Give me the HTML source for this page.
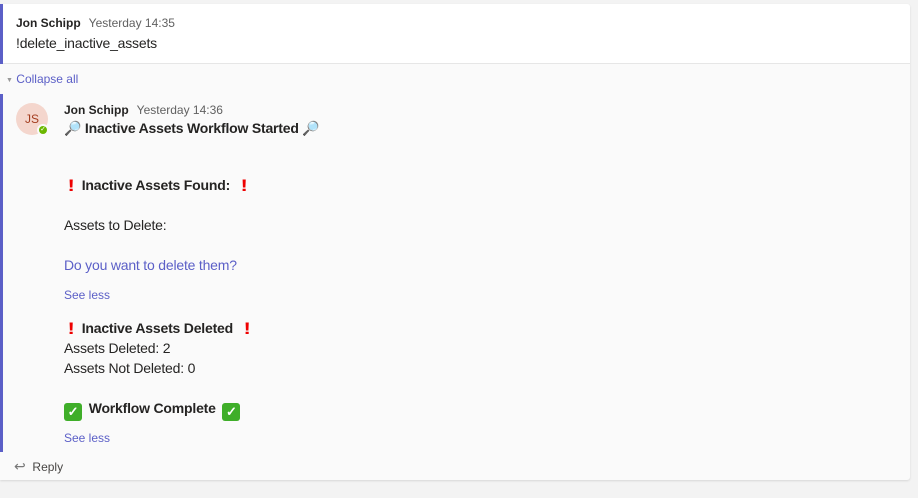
<!DOCTYPE html>
<html><head><style>
*{margin:0;padding:0;box-sizing:border-box}
body{width:918px;height:498px;background:#f3f3f3;font-family:"Liberation Sans",sans-serif;color:#252423;position:relative;overflow:hidden}
.card{position:absolute;left:0;top:4px;width:910px;height:476px;background:#fafafa;border-radius:0 3px 3px 0;box-shadow:0 1px 2px rgba(0,0,0,.12)}
.top{position:absolute;left:0;top:0;width:910px;height:60px;background:#fff;border-bottom:1px solid #e6e6e6;border-radius:0 3px 0 0}
.bar{position:absolute;left:0;width:3px;background:#5b5fc7}
.a{position:absolute;white-space:nowrap}
.n{font-size:12px;font-weight:bold}
.t{font-size:12px;color:#616161;margin-left:8px;font-weight:normal}
.b{font-size:14px;letter-spacing:-0.2px}
.bold{font-weight:bold}
.link{color:#5b5fc7}
.ex{color:#e00;font-weight:900;display:inline-block;width:14px;text-align:center;font-size:17px;transform:scaleX(1.3);vertical-align:-1px}
.ck{display:inline-block;width:18px;height:18px;background:#3fae29;border-radius:3px;color:#fff;text-align:center;line-height:18px;font-size:13px;vertical-align:-3px;margin:0 3px}
</style></head><body>
<div class="card">
<div class="top"></div>
<div class="bar" style="top:0;height:60px"></div>
<div class="bar" style="top:90px;height:358px"></div>
<div class="a n" style="left:16px;top:12px">Jon Schipp<span class="t">Yesterday 14:35</span></div>
<div class="a b" style="left:16px;top:31px">!delete_inactive_assets</div>
<div class="a" style="left:6px;top:68px;font-size:12px;color:#5b5fc7"><span style="font-size:7px;color:#999;vertical-align:1px">▼</span> Collapse all</div>
<div class="a" style="left:16px;top:99px;width:32px;height:32px;border-radius:50%;background:#f4d6cd;color:#a33c1e;font-size:12px;text-align:center;line-height:32px">JS</div>
<div class="a" style="left:37px;top:120px;width:12px;height:12px;border-radius:50%;background:#6bb700;border:2px solid #fafafa;color:#fff;font-size:7px;text-align:center;line-height:8px">✓</div>
<div class="a n" style="left:64px;top:99px">Jon Schipp<span class="t">Yesterday 14:36</span></div>
<div class="a b bold" style="left:64px;top:116px">🔎 Inactive Assets Workflow Started 🔎</div>
<div class="a b bold" style="left:64px;top:172px"><span class="ex">!</span> Inactive Assets Found: &nbsp;<span class="ex">!</span></div>
<div class="a b" style="left:64px;top:213px">Assets to Delete:</div>
<div class="a b link" style="left:64px;top:253px">Do you want to delete them?</div>
<div class="a link" style="left:64px;top:284px;font-size:12px">See less</div>
<div class="a b bold" style="left:64px;top:315px"><span class="ex">!</span> Inactive Assets Deleted &nbsp;<span class="ex">!</span></div>
<div class="a b" style="left:64px;top:336px">Assets Deleted: 2</div>
<div class="a b" style="left:64px;top:356px">Assets Not Deleted: 0</div>
<div class="a b bold" style="left:61px;top:396px"><span class="ck">✓</span> Workflow Complete <span class="ck">✓</span></div>
<div class="a link" style="left:64px;top:427px;font-size:12px">See less</div>
<div class="a" style="left:14px;top:454px;font-size:12px;color:#484644"><span style="color:#777;font-size:14px">↩</span>&nbsp; Reply</div>
</div>
</body></html>
